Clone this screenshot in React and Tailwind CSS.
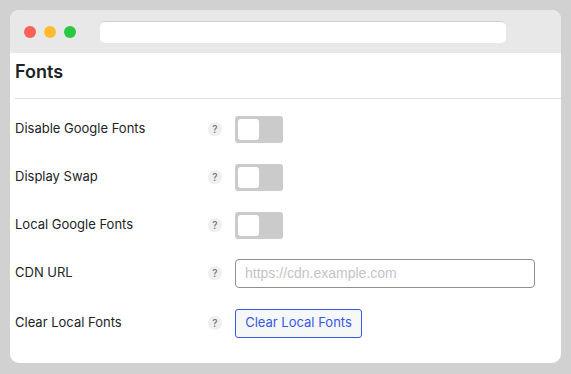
import React from "react";

const rows = [
  { label: "Disable Google Fonts", type: "toggle" },
  { label: "Display Swap", type: "toggle" },
  { label: "Local Google Fonts", type: "toggle" },
  { label: "CDN URL", type: "input" },
  { label: "Clear Local Fonts", type: "button" },
];

const Help = () => (
  <span className="w-[14px] h-[14px] rounded-full bg-[#efefef] text-[#777] text-[10px] leading-none flex items-center justify-center font-medium">
    ?
  </span>
);

const Toggle = () => (
  <div className="w-[48px] h-[27px] rounded-[3px] bg-[#cbcbcb] p-[3px]">
    <div className="w-[21px] h-[21px] rounded-[3px] bg-white" />
  </div>
);

const App = () => {
  return (
    <div className="h-[374px] w-[571px] bg-[#d1d1d1] pt-[10px] pl-[10px]">
      <div
        className="w-[551px] h-[353px] rounded-[9px] overflow-hidden bg-white"
        style={{ fontFamily: "Inter, 'Noto Sans', sans-serif" }}
      >
        {/* title bar */}
        <div className="h-[43px] bg-[#e8e8e8] flex items-center pl-[14px]">
          <div className="flex gap-[8px]">
            <span className="w-[12px] h-[12px] rounded-full bg-[#fe5f57]" />
            <span className="w-[12px] h-[12px] rounded-full bg-[#febc2e]" />
            <span className="w-[12px] h-[12px] rounded-full bg-[#28c840]" />
          </div>
          <div className="ml-[24px] w-[406px] h-[22px] rounded-[5px] bg-white border-t border-[#cfcfcf]" />
        </div>

        {/* content */}
        <div className="pl-[5px]">
          <h1 className="mt-[7px] text-[18px] leading-[24px] font-semibold text-[#1d2327]">
            Fonts
          </h1>
          <div className="mt-[14px] border-t border-[#e2e2e2]" />

          <div className="pt-[6px]">
            {rows.map((row, i) => (
              <div
                key={row.label}
                className={`h-[48px] flex items-center ${i === 4 ? "mt-[2px]" : ""}`}
              >
                <div className="w-[193px] text-[13px] text-[#1d2327]">
                  {row.label}
                </div>
                <Help />
                <div className="ml-[13px]">
                  {row.type === "toggle" && <Toggle />}
                  {row.type === "input" && (
                    <input
                      type="text"
                      placeholder="https://cdn.example.com"
                      className="w-[300px] h-[29px] rounded-[4px] border border-[#8c8f94] px-[9px] text-[14px] placeholder:text-[#c3c4c7] outline-none"
                      style={{ fontFamily: "'Liberation Sans', Arial, sans-serif" }}
                    />
                  )}
                  {row.type === "button" && (
                    <button className="h-[29px] w-[127px] rounded-[3px] border border-[#3858e9] bg-[#f6f7f7] text-[13px] text-[#3858e9]">
                      Clear Local Fonts
                    </button>
                  )}
                </div>
              </div>
            ))}
          </div>
        </div>
      </div>
    </div>
  );
};

export default App;
